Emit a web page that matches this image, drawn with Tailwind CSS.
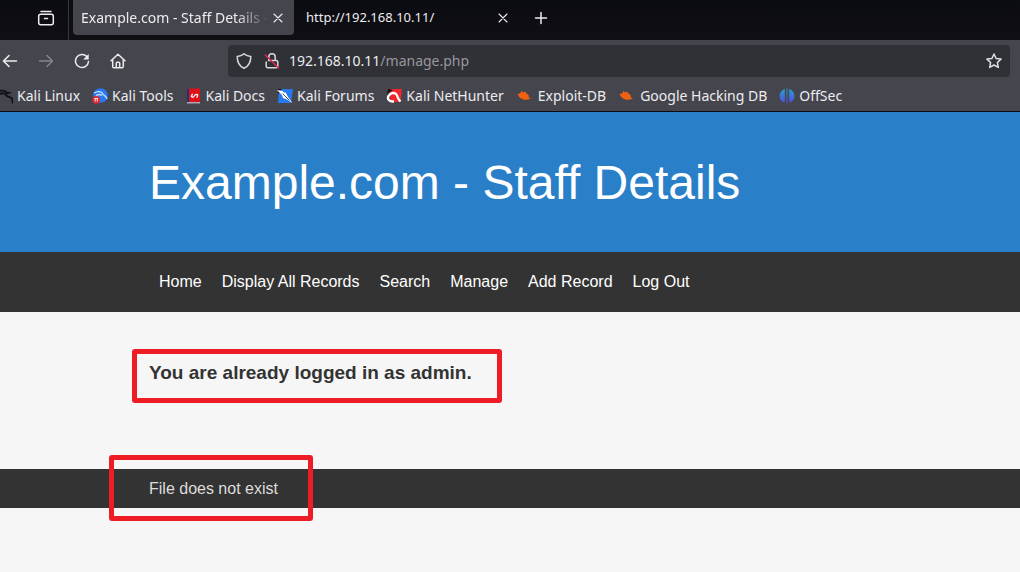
<!DOCTYPE html>
<html lang="en">
<head>
<meta charset="utf-8">
<title>Example.com - Staff Details</title>
<script src="https://cdn.jsdelivr.net/npm/@tailwindcss/browser@4"></script>
</head>
<body class="flex min-h-screen flex-col overflow-x-hidden bg-[#f6f6f6] font-['Liberation_Sans',Arial,sans-serif]">

<div class="border-b border-[#0c0c10] bg-[#45454e] font-['Noto_Sans',sans-serif] text-[#ececef]">
  <!-- Tab strip -->
  <div class="flex h-10 items-start bg-gradient-to-b from-[#0b0c12] to-[#0f0f14] text-sm">
    <button aria-label="Recent browsing" class="flex h-9 w-17 shrink-0 items-center justify-end pr-3">
      <svg class="size-5" viewBox="0 0 20 20" fill="none" stroke="currentColor" stroke-width="1.5" stroke-linecap="round"><path d="M5 3.5h10"/><rect x="2.7" y="6.2" width="14.6" height="10.6" rx="2"/><path d="M8.5 10.5h3"/></svg>
    </button>
    <div class="h-10 w-px bg-[#36363c]"></div>
    <div class="ml-1 flex h-[35px] w-[221px] items-center rounded-b-sm bg-[#45454e] px-2">
      <span class="w-[188px] overflow-hidden whitespace-nowrap [mask-image:linear-gradient(to_right,black_82%,transparent)]">Example.com - Staff Details -</span>
      <button aria-label="Close tab" class="ml-[3px]"><svg class="size-3" viewBox="0 0 12 12" stroke="currentColor" stroke-width="1.1" stroke-linecap="round"><path d="M2 2l8 8M10 2l-8 8"/></svg></button>
    </div>
    <div class="flex h-[35px] w-[215px] items-center justify-between pl-3">
      <span class="text-[13px]">http://192.168.10.11/</span>
      <button aria-label="Close tab"><svg class="size-3" viewBox="0 0 12 12" stroke="currentColor" stroke-width="1.1" stroke-linecap="round"><path d="M2 2l8 8M10 2l-8 8"/></svg></button>
    </div>
    <button aria-label="New tab" class="ml-6 flex h-[35px] items-center"><svg class="size-4" viewBox="0 0 16 16" stroke="currentColor" stroke-width="1.5" stroke-linecap="round"><path d="M8 2.5v11M2.5 8h11"/></svg></button>
  </div>

  <!-- Navigation toolbar -->
  <div class="flex h-10 items-center pt-px pr-[10px]">
    <div class="flex w-[228px] shrink-0 items-center gap-5 pl-[2px]">
      <button aria-label="Back"><svg class="size-4" viewBox="0 0 16 16" fill="none" stroke="currentColor" stroke-width="1.6" stroke-linecap="round" stroke-linejoin="round"><path d="M14.5 8H1.5M7 2.5L1.5 8 7 13.5"/></svg></button>
      <button aria-label="Forward" disabled class="text-[#85858b]"><svg class="size-4" viewBox="0 0 16 16" fill="none" stroke="currentColor" stroke-width="1.5" stroke-linecap="round" stroke-linejoin="round"><path d="M1.5 8h13M9 2.5L14.5 8 9 13.5"/></svg></button>
      <button aria-label="Reload"><svg class="size-4" viewBox="0 0 16 16" fill="none" stroke="currentColor" stroke-width="1.5" stroke-linecap="round"><path d="M12.8 3.6A6.5 6.5 0 1 0 14.5 8.5"/><path d="M14.7 1v5.5H9.2z" fill="currentColor" stroke="none"/></svg></button>
      <button aria-label="Home"><svg class="size-4" viewBox="0 0 16 16" fill="none" stroke="currentColor" stroke-width="1.5" stroke-linecap="round" stroke-linejoin="round"><path d="M1 7.8L8 1.2l7 6.6M2.7 6.5V13.500a1.300 1.300 0 0 0 1.300 1.300h8a1.300 1.300 0 0 0 1.300-1.300V6.500M6.300 14.500V10.200a1 1 0 0 1 1-1h1.400a1 1 0 0 1 1 1v4.300"/></svg></button>
    </div>
    <div class="flex h-8 flex-1 items-center rounded bg-[#303037] px-2">
      <svg class="size-4 shrink-0 text-[#d8d8dc]" viewBox="0 0 16 16" fill="none" stroke="currentColor" stroke-width="1.5" stroke-linejoin="round"><path d="M8 .8c2 1.500 4.200 2.300 6.800 2.600C14.800 9 13 13 8 15.300 3 13 1.200 9 1.200 3.400 3.800 3.100 6 2.300 8 .8z"/></svg>
      <svg class="ml-3 size-4 shrink-0 text-[#d8d8dc]" viewBox="0 0 16 16" fill="none" stroke="currentColor" stroke-width="1.5" stroke-linecap="round"><path d="M4.800 7V4a3.200 3.200 0 0 1 6.400 0v3M4.500 7.500h7.800a1.500 1.500 0 0 1 1.500 1.500v4.200a1.500 1.500 0 0 1-1.500 1.500H3.700a1.500 1.500 0 0 1-1.500-1.500V9"/><path d="M1.300 2L14.500 15" stroke="#e22850"/></svg>
      <div class="ml-[9px] flex-1 text-sm" role="textbox" aria-label="Address" tabindex="0">192.168.10.11<span class="text-[#97979d]">/manage.php</span></div>
      <button aria-label="Bookmark this page"><svg class="size-4" viewBox="0 0 16 16" fill="none" stroke="#dedee2" stroke-width="1.5" stroke-linejoin="round"><path d="M8 1l2.100 4.500 4.900.6-3.600 3.400.9 4.900L8 12l-4.300 2.400.9-4.900L1 6.100l4.900-.6z"/></svg></button>
    </div>
  </div>

  <!-- Bookmarks -->
  <nav aria-label="Bookmarks" class="flex h-[31px] items-center gap-3 overflow-hidden text-sm whitespace-nowrap">
    <a href="#" class="flex items-center gap-1"><svg class="h-4 w-[13px]" viewBox="3 0 13 16" fill="none" stroke="#111115" stroke-linecap="round"><path d="M2 3c4-1 7 0 8.500 2.500" stroke-width="1.800"/><path d="M2 6.500c3-2 6-1.500 7 .5 1 2.500 5 1 6.300 4.500l.4 3" stroke-width="2"/><path d="M9.500 4.500l4 .5" stroke-width="1.500"/></svg>Kali Linux</a>
    <a href="#" class="flex items-center gap-1"><svg class="size-4" viewBox="0 0 16 16"><circle cx="8.500" cy="7.500" r="7.300" fill="#2878ef"/><path d="M2 5c4-2.500 8-1.500 9 1 .8 2 3.300 1.500 4 5M4 7.500c3-1.500 5-1 6 0" fill="none" stroke="#c8e2ff" stroke-width="1.300"/><circle cx="4.200" cy="11.800" r="3.900" fill="#e52832"/><path d="M2.500 10.500h3.500M3.200 10.500v3M5.300 10.500v3" stroke="#fff" stroke-width=".9"/></svg>Kali Tools</a>
    <a href="#" class="flex items-center gap-1"><svg class="size-4" viewBox="0 0 16 16"><path d="M1 1h2v14H1z" fill="#26306a"/><path d="M3 .5h11v13.500H3z" fill="#e01018"/><path d="M1 14h13v1.500H1z" fill="#a9a9b4"/><path d="M10.500 9.500c1.500-.5 1.200-3.200-.4-3.200-1.700 0-1.500 3-3.100 3-1.600 0-1.600-2.800-.2-3.200M6 9.200l-1-1.500M11 6.200l1 1.500" fill="none" stroke="#fff" stroke-width="1.200"/></svg>Kali Docs</a>
    <a href="#" class="flex items-center gap-1"><svg class="size-4" viewBox="0 0 16 16"><path d="M2 1h14l-2 14H1z" fill="#267af0"/><path d="M1 1h4L1 6z" fill="#111"/><path d="M0 2l5 .8L8 5l.5-1 2.500 5 4.500 6-5.500-3.500L6 10l-1-3z" fill="#fff"/><path d="M5.500 5.500l7 7" stroke="#202530" stroke-width=".8"/></svg>Kali Forums</a>
    <a href="#" class="flex items-center gap-1"><svg class="size-4" viewBox="0 0 16 16"><path d="M2 1h14l-1.500 13H5z" fill="#f1252c"/><path d="M2 1l5 1-6 4z" fill="#111"/><path d="M8 13.500c-5 .5-7-2.500-5.500-5.500C4.500 4.500 9 4 10.500 6.500c1.500 2.500.5 3.500 4 7" fill="none" stroke="#fff" stroke-width="2.400"/></svg>Kali NetHunter</a>
    <a href="#" class="flex items-center gap-[6px]"><svg class="size-4" viewBox="0 0 16 16"><path d="M1.500 6l2.500-.5L5.500 3 7 4.200l2-.4 2.500 2.500 1.500 1.500-.5 1.500 2.500 1.500-3.500.7-2.500.5L5 10.500 3 8.800z" fill="#f16010"/></svg>Exploit-DB</a>
    <a href="#" class="flex items-center gap-[6px]"><svg class="size-4" viewBox="0 0 16 16"><path d="M1.500 6l2.500-.5L5.500 3 7 4.200l2-.4 2.500 2.500 1.500 1.500-.5 1.500 2.500 1.500-3.500.7-2.500.5L5 10.500 3 8.800z" fill="#f16010"/></svg>Google Hacking DB</a>
    <a href="#" class="flex items-center gap-1"><svg class="size-4" viewBox="0 0 16 16"><defs><linearGradient id="brand" x2="0" y2="1"><stop stop-color="#22a6c8"/><stop offset="1" stop-color="#5547e8"/></linearGradient></defs><path d="M5.800.8v12.700l-1.500.8C-1 11-1 4 5.800.8zM7.500.5h1v15h-1zM10.200.8v12.700l1.500.8C17 11 17 4 10.200.8z" fill="url(#brand)"/></svg>OffSec</a>
  </nav>
</div>

<header class="bg-[#2a80c8] pt-[43px] pb-[41px] pl-[149px]">
  <h1 class="text-5xl leading-14 text-white">Example.com - Staff Details</h1>
</header>
<nav aria-label="Site" class="flex h-15 items-center gap-5 bg-[#333] pl-[159px] text-base text-white">
  <a href="#">Home</a>
  <a href="#">Display All Records</a>
  <a href="#">Search</a>
  <a href="#">Manage</a>
  <a href="#">Add Record</a>
  <a href="#">Log Out</a>
</nav>
<main class="h-[157px] pt-[49px] pl-[149px]">
  <div class="relative w-fit">
    <h2 class="text-[19px] leading-6 font-bold text-[#333]">You are already logged in as admin.</h2>
    <div class="absolute -top-3 -left-[17px] h-[54px] w-[370px] rounded-[3px] border-5 border-[#ee1c25]"></div>
  </div>
</main>
<footer class="bg-[#333] py-2 pl-[149px]">
  <div class="relative w-fit">
    <p class="text-base leading-[23px] text-[#ddd]">File does not exist</p>
    <div class="absolute -top-[22px] -left-10 h-[66px] w-[204px] rounded-[3px] border-5 border-[#ee1c25]"></div>
  </div>
</footer>
</body>
</html>
